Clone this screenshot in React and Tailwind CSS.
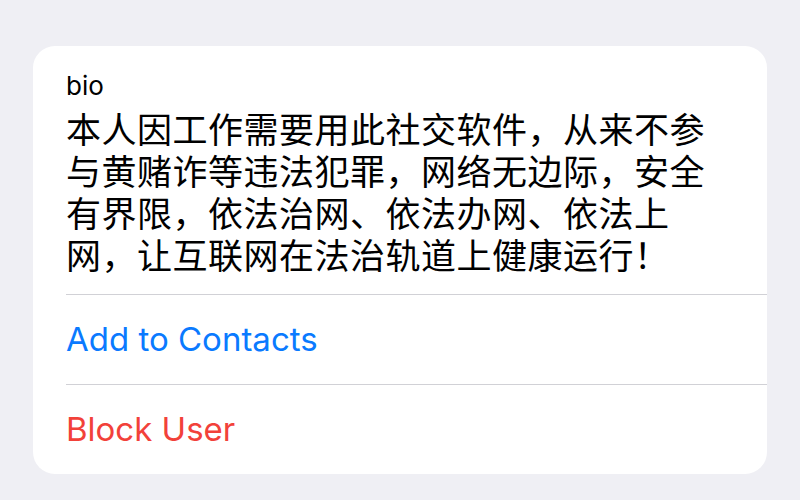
import React from "react";

const bioLines = [
  "本人因工作需要用此社交软件，从来不参",
  "与黄赌诈等违法犯罪，网络无边际，安全",
  "有界限，依法治网、依法办网、依法上",
  "网，让互联网在法治轨道上健康运行！",
];

const ActionRow = ({ label, color }) => (
  <div className="ml-[33px] border-t border-[#d1d1d6] h-[90px] flex items-center">
    <span className={`text-[33px] leading-none ${color}`}>{label}</span>
  </div>
);

export default function App() {
  return (
    <div
      className="w-[800px] h-[500px] bg-[#efeff4] pt-[46px] px-[33px]"
      style={{ fontFamily: '"Inter", "Noto Sans CJK SC", sans-serif' }}
    >
      {/* Card */}
      <div className="bg-white rounded-[22px] overflow-hidden">
        {/* Bio */}
        <div className="pl-[33px] pt-[26px] pb-[17px]">
          <div className="text-[26px] leading-[28px] text-black">bio</div>
          <div className="mt-[9px] text-[35px] leading-[42px] tracking-[0.5px] text-black">
            {bioLines.map((line) => (
              <div key={line} className="whitespace-nowrap">
                {line}
              </div>
            ))}
          </div>
        </div>

        {/* Actions */}
        <ActionRow label="Add to Contacts" color="text-[#0a7aff]" />
        <ActionRow label="Block User" color="text-[#f2413a]" />
      </div>
    </div>
  );
}
